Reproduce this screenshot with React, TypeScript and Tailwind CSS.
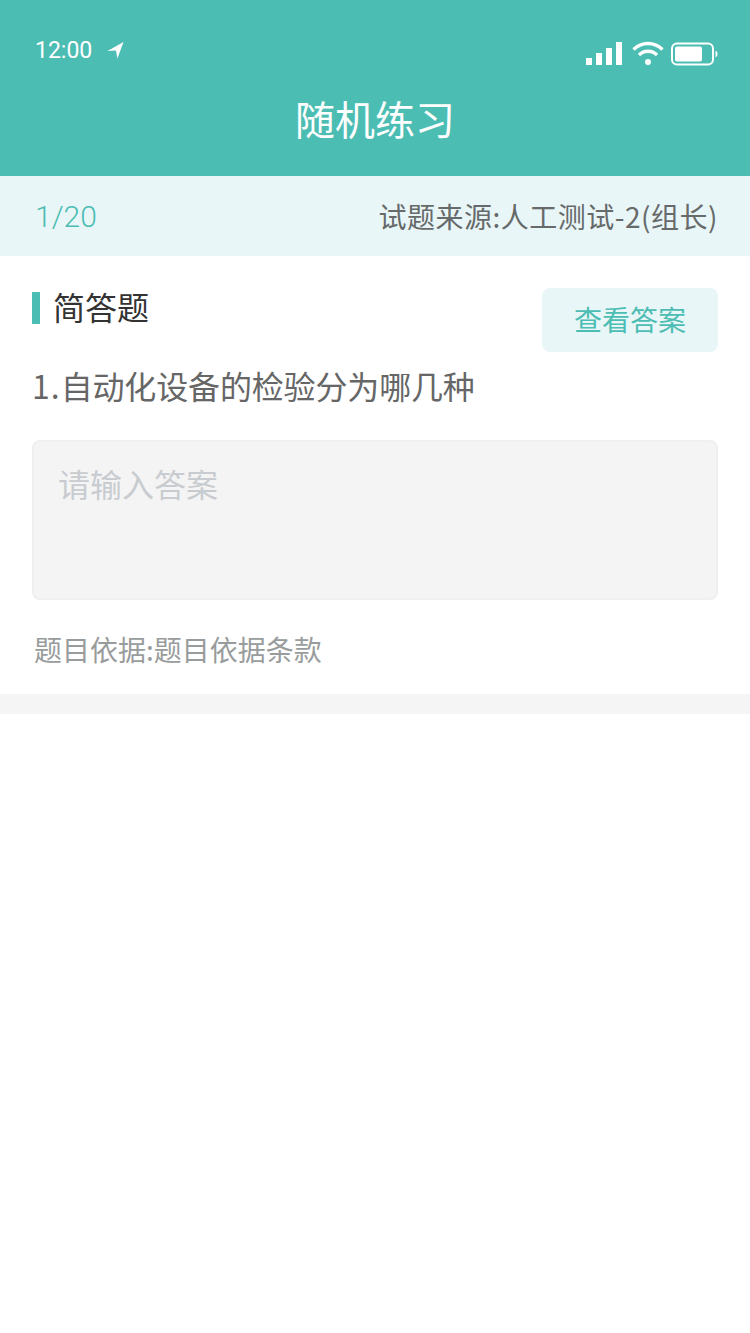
import React from "react";

const cjk = { fontFamily: '"Noto Sans CJK SC", sans-serif' };

const StatusBar = () => {
  return (
    <div className="flex h-[48px] items-start justify-between pl-[35px] pr-[32px]">
      <div className="flex items-center gap-[15px]">
        <span className="font-['Roboto',sans-serif] text-[23px] leading-[48px] font-normal text-white">12:00</span>
        <svg width="17" height="18" viewBox="0 0 18 18" className="mb-[3px]">
          <path d="M17.5 0.5 L0.5 10 L9.5 9.5 L11 18 Z" fill="#ffffff" />
        </svg>
      </div>
      <div className="mt-[14px] flex items-center">
        <svg width="36" height="26" viewBox="0 0 36 26" className="mr-[10px]">
          <rect x="0" y="17" width="6" height="7" fill="#fff" />
          <rect x="10" y="12" width="6" height="12" fill="#fff" />
          <rect x="20" y="7" width="6" height="17" fill="#fff" />
          <rect x="30" y="1" width="6" height="23" fill="#fff" />
        </svg>
        <svg width="32" height="26" viewBox="0 0 32 26" fill="none" stroke="#fff" strokeWidth="3.4" className="mr-[7px]">
          <path d="M1.5 8.5 C9.5 0.5 22.5 0.5 30.5 8.5" />
          <path d="M7 14 C12 9 20 9 25 14" />
          <circle cx="16" cy="21" r="3" fill="#fff" stroke="none" />
        </svg>
        <svg width="47" height="26" viewBox="0 0 47 26" fill="none">
          <rect x="1" y="2.5" width="41" height="21" rx="5" stroke="#fff" strokeWidth="2" />
          <rect x="4" y="5.5" width="27" height="15" rx="2" fill="#fff" />
          <path d="M44.5 9.5 C46 10.5 46.5 11.5 46.5 13 C46.5 14.5 46 15.5 44.5 16.5 Z" fill="#fff" />
        </svg>
      </div>
    </div>
  );
};

const App = () => {
  return (
    <div className="min-h-[1333px] w-[750px] bg-white" style={cjk}>
      <header className="h-[176px] bg-[#4cbdb3] pt-[27px]">
        <StatusBar />
        <h1 className="mt-[19px] text-center text-[40px] leading-[48px] font-normal text-white">随机练习</h1>
      </header>

      <div className="flex h-[80px] items-center justify-between bg-[#e9f6f8] pl-[35px] pr-[32px]">
        <span className="font-['Roboto',sans-serif] text-[30px] font-light text-[#4cbdb3]">1/20</span>
        <span className="text-[28px] tracking-[0.5px] text-[#666a6a]">试题来源:人工测试-2(组长)</span>
      </div>

      <section className="border-b-[20px] border-[#f5f5f5] px-[32px] pt-[32px] pb-[24px]">
        <div className="flex items-start justify-between">
          <div className="flex items-center gap-[13px]">
            <div className="mt-[2px] h-[32px] w-[8px] bg-[#4cbdb3]" />
            <h2 className="mt-[-2px] text-[32px] leading-[40px] font-normal text-[#333333]">简答题</h2>
          </div>
          <button className="h-[64px] w-[176px] rounded-[8px] bg-[#e9f6f8] pb-[2px] text-[28px] text-[#4cbdb3]">查看答案</button>
        </div>
        <p className="mt-[5px] text-[32px] leading-[56px] text-[#666666]">
          <span className="tracking-[1px]">1.</span>
          <span className="tracking-[-0.15px]">自动化设备的检验分为哪几种</span>
        </p>
        <div className="mt-[27px] h-[160px] rounded-[8px] border-2 border-[#efefef] bg-[#f4f4f5] pl-[24px] pr-[25px] pt-[13px] text-[32px] leading-[56px] text-[#c8ccd0]">
          请输入答案
        </div>
        <p className="mt-[28px] pl-[2px] text-[28px] leading-[42px] text-[#999c9c]">题目依据:题目依据条款</p>
      </section>
    </div>
  );
};

export default App;
